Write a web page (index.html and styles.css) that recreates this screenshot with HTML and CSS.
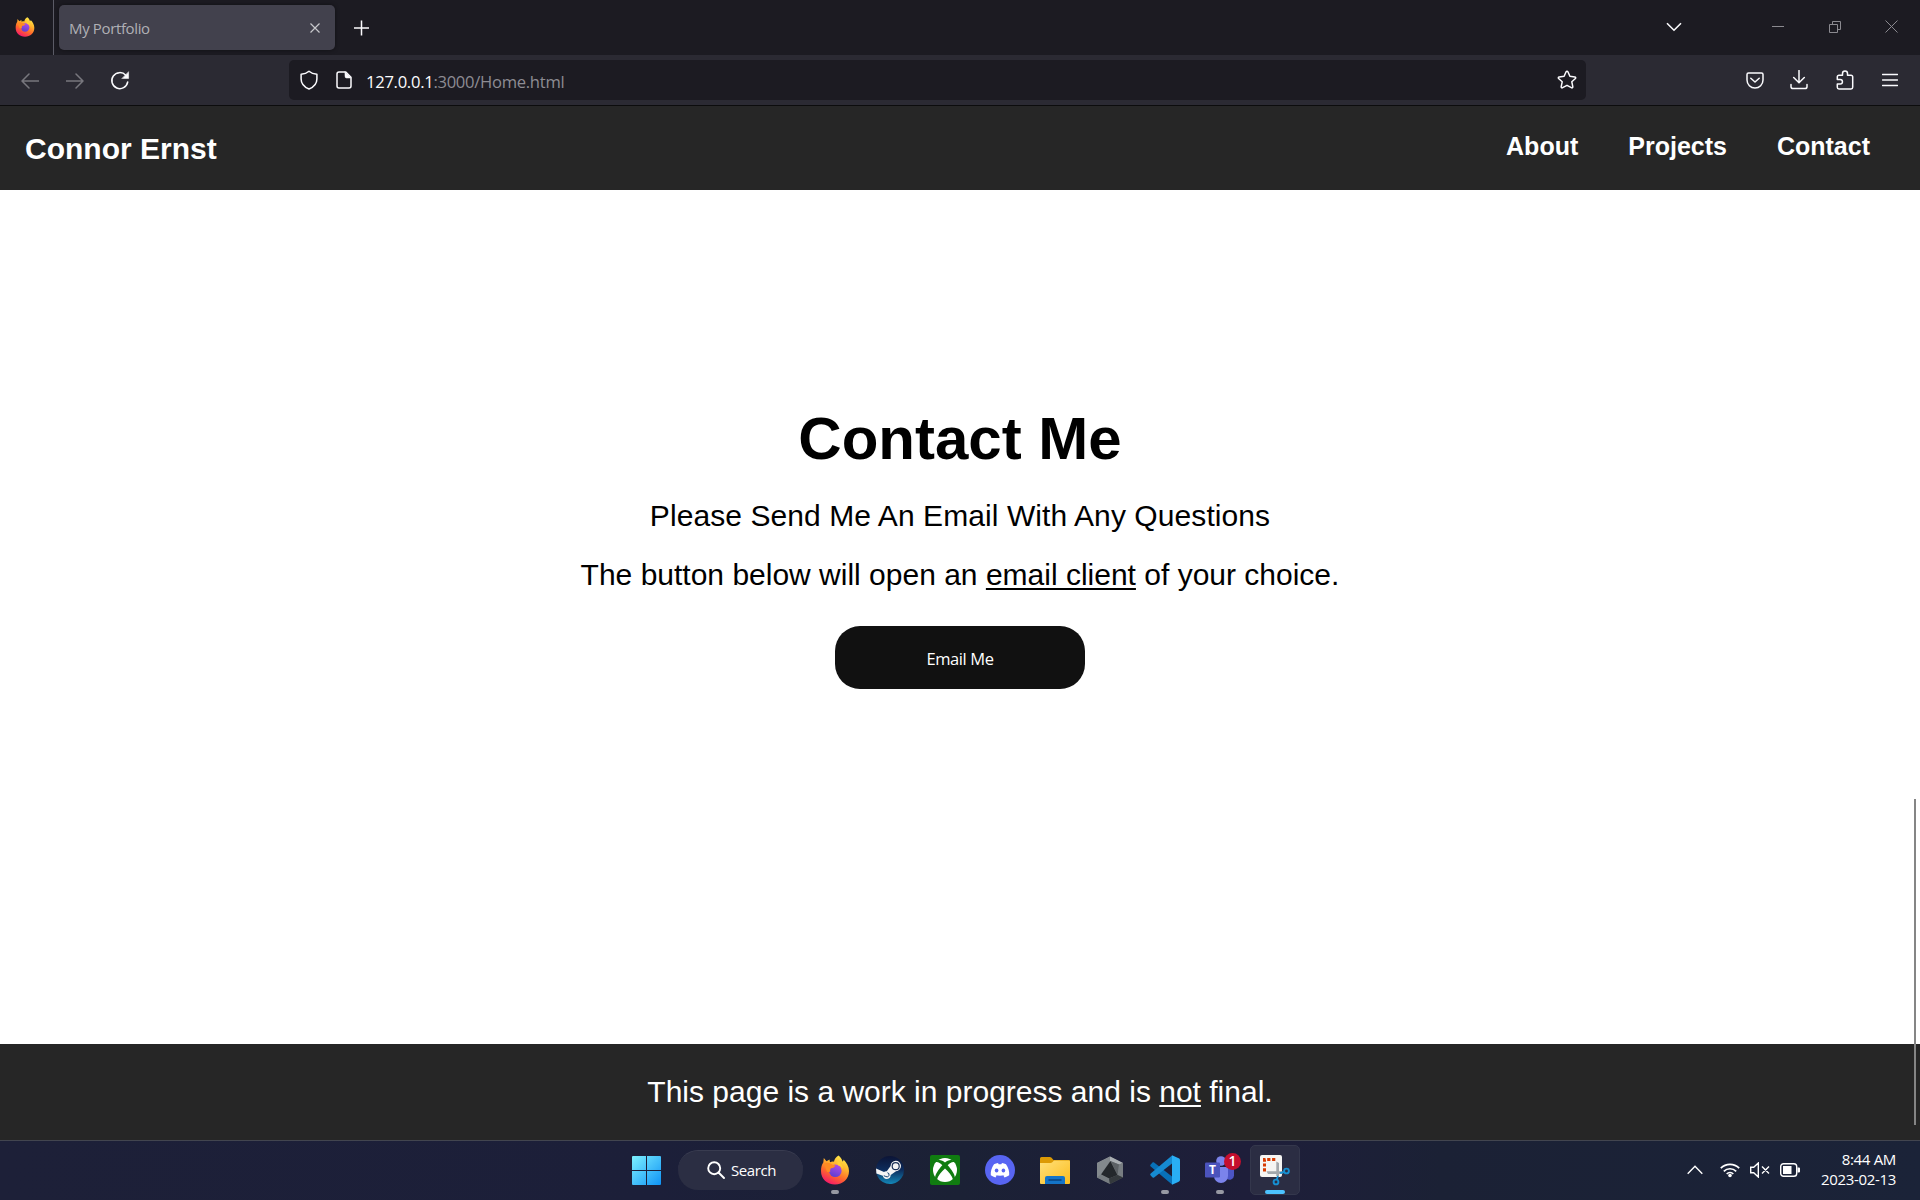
FILE: index.html
```html
<!DOCTYPE html>
<html lang="en">
<head>
<meta charset="utf-8">
<title>My Portfolio</title>
<link rel="stylesheet" href="styles.css">
</head>
<body>
<svg class="defs" width="0" height="0" aria-hidden="true">
  <defs>
    <linearGradient id="flame" x1=".8" y1="0" x2=".3" y2="1"><stop offset="0" stop-color="#fff44f"/><stop offset=".35" stop-color="#ffb52e"/><stop offset=".65" stop-color="#ff6a2a"/><stop offset="1" stop-color="#f5156c"/></linearGradient>
    <linearGradient id="globe" x1=".7" y1="0" x2=".3" y2="1"><stop offset="0" stop-color="#b04be8"/><stop offset="1" stop-color="#5b3fd0"/></linearGradient>
    <linearGradient id="win" x1="0" y1="0" x2="1" y2="1"><stop offset="0" stop-color="#7df0ff"/><stop offset="1" stop-color="#0f93f5"/></linearGradient>
    <linearGradient id="steam" x1="0" y1="0" x2="0" y2="1"><stop offset="0" stop-color="#0c1436"/><stop offset=".5" stop-color="#0d2c5c"/><stop offset="1" stop-color="#1387b8"/></linearGradient>
    <linearGradient id="folder" x1="0" y1="0" x2="1" y2="1"><stop offset="0" stop-color="#ffe07a"/><stop offset="1" stop-color="#fcbd1e"/></linearGradient>
    <linearGradient id="hex" x1="0" y1="0" x2="1" y2="1"><stop offset="0" stop-color="#9aa0a4"/><stop offset="1" stop-color="#44484c"/></linearGradient>
    <symbol id="firefox" viewBox="0 0 30 30">
      <path fill="url(#flame)" d="M18.500 .500C20.500 2 22 4 22.500 6.500c.8-.3 1-1 1-2 3 3 5.500 7 5.500 11.500C29 24 23 29.500 15 29.500S1 24 1 16C1 12.500 1.700 9.500 3.300 7.500L3.800 3 6.500 6.300 9.500 4.500 10 7.200c1.200-.6 2.700-.8 4-.5C14.200 4.200 16 2 18.500 .5z"/>
      <circle cx="15.300" cy="15.800" r="6.300" fill="url(#globe)"/>
      <path fill="#ff8b22" d="M4 8.500c2.200-1 5-1 7.200.4 1.500 1 3 1.300 4.300 1.500-.5 1.600-2.500 2.500-4.500 2.800-.9 1-1.100 2.300-.7 3.500L7 17z"/>
      <path fill="#ffcf35" d="M18 4.500c1.500 2.500 4.500 4.500 5 9.500-1.200-2-2.500-3-4.500-3.500-1.500-2-1.500-4-.5-6z"/>
    </symbol>
  </defs>
</svg>

<header class="tab-strip">
  <div class="pinned"><svg width="20" height="20"><use href="#firefox"/></svg></div>
  <div class="tab">
    <span class="tab-title">My Portfolio</span>
    <svg class="tab-close" width="10" height="10" viewBox="0 0 10 10"><path d="M.5 .5l9 9M9.500 .5l-9 9"/></svg>
  </div>
  <svg class="new-tab" width="16" height="16" viewBox="0 0 16 16"><path d="M8.500 .5v15M1 8h15"/></svg>
  <div class="window-controls">
    <svg class="list-tabs" width="16" height="10" viewBox="0 0 16 10"><path d="M1 1.200l7 7 7-7"/></svg>
    <svg width="12" height="13" viewBox="0 0 12 13"><path d="M0 6.500h12"/></svg>
    <svg width="12" height="12" viewBox="0 0 12 12"><path d="M.5 3.500h8v8h-8zM3.500 3.500v-3h8v8h-3"/></svg>
    <svg width="13" height="13" viewBox="0 0 13 13"><path d="M.5 .5l12 12M12.500 .5l-12 12"/></svg>
  </div>
</header>

<div class="toolbar">
  <div class="nav-buttons">
    <svg class="dim" width="18" height="16" viewBox="0 0 18 16"><path d="M18 8H1.200M8 1L1 8l7 7"/></svg>
    <svg class="dim" width="18" height="16" viewBox="0 0 18 16"><path d="M0 8h16.800M10 1l7 7-7 7"/></svg>
    <svg width="20" height="20" viewBox="0 0 20 20"><path d="M17.700 11A8 8 0 1 1 15.800 4.300"/><path class="solid" d="M18.600 1v6.500h-6.500z"/></svg>
  </div>
  <div class="url-bar">
    <svg width="18" height="20" viewBox="0 0 18 20"><path d="M9 1.200C7 3 4 4 1.100 4.200V9c0 4.500 3 8 7.900 10 4.900-2 7.900-5.500 7.900-10V4.200C14 4 11 3 9 1.200z"/></svg>
    <svg class="page-icon" width="16" height="18" viewBox="0 0 16 18"><path d="M3 1h6.800L15 6.200V15a2 2 0 0 1-2 2H3a2 2 0 0 1-2-2V3a2 2 0 0 1 2-2z"/><path class="solid" d="M9 1l6 6H10.500A1.500 1.500 0 0 1 9 5.500z"/></svg>
    <span class="url">127.0.0.1<span class="url-rest">:3000/Home.html</span></span>
    <svg class="star" width="20" height="20" viewBox="0 0 20 20"><path d="M10 1.200c.4 0 .7.200.9.600l2 4.500 4.900.6c.9.100 1.200 1 .6 1.600l-3.600 3.300 1 4.900c.2.900-.6 1.500-1.400 1L10 15.300l-4.400 2.400c-.8.500-1.600-.1-1.400-1l1-4.900L1.600 8.500C1 7.900 1.300 7 2.200 6.900l4.900-.6 2-4.500c.2-.4.500-.6.9-.6z"/></svg>
  </div>
  <div class="tool-buttons">
    <svg width="18" height="17" viewBox="0 0 18 17"><path d="M2.500 1h13A1.500 1.500 0 0 1 17 2.500V8A8 8 0 0 1 1 8V2.500A1.500 1.500 0 0 1 2.500 1z"/><path d="M4.800 6.200L9 10l4.200-3.800"/></svg>
    <svg width="18" height="20" viewBox="0 0 18 20"><path d="M9 .5v12M3.700 7.500L9 12.800l5.300-5.300M1 14.500v2.200C1 18 1.700 18.500 3 18.500h12c1.300 0 2-.5 2-1.800v-2.200"/></svg>
    <svg width="18" height="20" viewBox="0 0 18 20"><path d="M6.500 5.200V3.500a2.500 2.500 0 0 1 5 0v1.700H15A1.700 1.700 0 0 1 16.700 7v10.200a1.700 1.700 0 0 1-1.700 1.700H3a1.700 1.700 0 0 1-1.700-1.700V14h2.900a2 2 0 0 0 0-4.500H1.300V7A1.700 1.700 0 0 1 3 5.200z"/></svg>
    <svg width="16" height="14" viewBox="0 0 16 14"><path d="M.5 1.500h15M.5 7h15M.5 12.500h15"/></svg>
  </div>
</div>

<div class="site">
  <nav class="site-nav">
    <a class="brand">Connor Ernst</a>
    <div class="links"><a>About</a><a>Projects</a><a>Contact</a></div>
  </nav>
  <main class="contact">
    <h1>Contact Me</h1>
    <p class="lead">Please Send Me An Email With Any Questions</p>
    <p>The button below will open an <u>email client</u> of your choice.</p>
    <button class="email-button">Email Me</button>
  </main>
  <footer class="site-footer"><p>This page is a work in progress and is <u>not</u> final.</p></footer>
  <div class="scroll-thumb"></div>
</div>

<div class="taskbar">
  <div class="apps">
    <svg class="start" width="29" height="29" viewBox="0 0 29 29"><path fill="url(#win)" d="M1 0h13v14H0V1a1 1 0 0 1 1-1zM15 0h13a1 1 0 0 1 1 1v13H15zM0 15h14v14H1a1 1 0 0 1-1-1zM15 15h14v13a1 1 0 0 1-1 1H15z"/></svg>
    <div class="search"><svg width="18" height="18" viewBox="0 0 18 18"><circle cx="7.200" cy="7.200" r="6"/><path d="M11.500 11.500l5.500 5.500"/></svg><span>Search</span></div>
    <div class="slot running"><svg width="30" height="30"><use href="#firefox"/></svg></div>
    <div class="slot"><svg width="30" height="30" viewBox="0 0 30 30"><path fill="url(#steam)" d="M15 1a14 14 0 1 1-13.400 18L1 13A14 14 0 0 1 15 1z"/><path fill="#f4f4f4" d="M1 13.500l8 3.400a4 4 0 0 1 2.800-.6l3.800-5.300a5.200 5.200 0 1 1 5.400 5.200l-5.300 3.800a4 4 0 0 1-7.900.8L1.400 18.500z"/><circle cx="20.700" cy="11.200" r="3.500" fill="#f4f4f4" stroke="#1c3158" stroke-width="1.200"/><path d="M8.800 20.700l2 .8a2.100 2.100 0 1 0 1.600-3.800" fill="none" stroke="#174371" stroke-width="1"/></svg></div>
    <div class="slot"><svg width="30" height="30" viewBox="0 0 30 30"><rect width="30" height="30" rx="2" fill="#107c10"/><circle cx="15" cy="15" r="12" fill="#fff"/><path fill="#107c10" d="M7 5.500C10 4.300 13 6 15 7.500c2-1.500 5-3.200 8-2 1 .3 2 1 1.500 1.700C22 6.600 19.500 8.500 17.700 10.300c3.700 4.200 7 8.700 7.300 12.700l-1.800 2C22 20.500 18.500 16.500 15 13.400 11.500 16.500 8 20.500 6.800 25L5 23c.3-4 3.600-8.500 7.300-12.700C10.500 8.500 8 6.600 5.500 7.200 5 6.500 6 5.800 7 5.500z"/></svg></div>
    <div class="slot"><svg width="30" height="30" viewBox="0 0 30 30"><circle cx="15" cy="15" r="15" fill="#5865f2"/><path fill="#fff" d="M9 9.200a17 17 0 0 1 4-1.200l.7 1.300h2.600L17 8a17 17 0 0 1 4 1.200c2.500 3.600 3.500 7.200 3.200 11a15 15 0 0 1-4.700 2.300l-1.100-1.900 1.300-.7c-3 1-6.400 1-9.400 0l1.300.7-1.100 1.900a15 15 0 0 1-4.700-2.300c-.3-3.800.7-7.400 3.200-11z"/><ellipse cx="11.600" cy="15.600" rx="1.800" ry="2" fill="#5865f2"/><ellipse cx="18.400" cy="15.600" rx="1.800" ry="2" fill="#5865f2"/></svg></div>
    <div class="slot"><svg width="30" height="30" viewBox="0 0 30 30"><path fill="#dc9a05" d="M0 3.500A1.500 1.500 0 0 1 1.500 2h8.300c.6 0 1 .2 1.500.6L13.500 5H29a1 1 0 0 1 1 1v8H0z"/><path fill="url(#folder)" d="M0 8h10.500c.8 0 1.300-.3 1.800-.8L14 5.500h15a1 1 0 0 1 1 1V28a1 1 0 0 1-1 1H1a1 1 0 0 1-1-1z"/><path fill="#1474c8" d="M5 29v-6a2 2 0 0 1 2-2h16a2 2 0 0 1 2 2v6z"/><path stroke="#07427f" stroke-width="1.500" stroke-linecap="round" d="M9 25h12"/></svg></div>
    <div class="slot"><svg width="30" height="30" viewBox="0 0 30 30"><path fill="url(#hex)" d="M15 1.500l13 6.500v14.500L15 29 2 22.500V8z"/><path fill="#a9aeb2" d="M15 1.500L28 8l-4 1.500L15 6z"/><path fill="#83898d" d="M2 8l13-6.500V6L6 19.500 2 22.500z"/><path fill="#24282c" d="M15.500 6L22.500 20 14 23.500 6 19.500z"/><path fill="#5c6165" d="M15.500 6L24 9.500 22.500 20z"/><path fill="#777d81" d="M2 22.500L6 19.500l8 4 1 5.500z"/><path fill="#777d81" d="M28 8l-4 1.500L22.500 20l5.500 2.500z"/><path fill="#34393d" d="M14 23.500l8.500-3.500 5.500 2.500L15 29z"/></svg></div>
    <div class="slot running"><svg width="30" height="30" viewBox="0 0 30 30"><path fill="#0871b8" d="M.7 9.500l1.600-1.800c.5-.5 1.200-.5 1.800-.1L22 21.500V29.500L.7 11.500c-.7-.6-.6-1.400 0-2z"/><path fill="#168bd2" d="M.7 20.500l1.600 1.800c.5.500 1.200.5 1.800.1L22 8.500V.5L.7 18.500c-.7.600-.6 1.400 0 2z"/><path fill="#29aef4" d="M22 .3L28.700 3.300c.8.400 1.300 1 1.300 1.900v19.600c0 .9-.5 1.500-1.300 1.900L22 29.700z"/></svg></div>
    <div class="slot running"><svg class="teams" width="30" height="30" viewBox="0 0 30 30"><path fill="#4c55c5" d="M20 12h9v8.500a4.500 4.500 0 0 1-7 3.500z"/><circle cx="16" cy="6" r="4.800" fill="#7b83eb"/><path fill="#7b83eb" d="M9 12h14v9a7 7 0 0 1-14 0z"/><rect y="7.500" width="15" height="15" rx="1.300" fill="#4b53bc"/><text x="7.500" y="19" text-anchor="middle">T</text></svg><span class="badge">1</span></div>
    <div class="slot active"><svg width="30" height="30" viewBox="0 0 30 30"><rect width="22" height="22" rx="2" fill="#f5f5f3"/><path fill="none" stroke="#d83b01" stroke-width="3" stroke-dasharray="3.200 1.700" d="M4.500 16.500v-12h12"/><path fill="#a3a8ac" d="M16.300 6.500l2.700 1.500v13h-2.700zM6.500 16.300h16v2.700H8z"/><circle cx="26.500" cy="16" r="2.400"/><circle cx="16" cy="27" r="2.400"/><path d="M24 17l-4 1.200M16.800 24.500l1.200-3.500" class="blade"/></svg></div>
  </div>
  <div class="tray">
    <svg width="16" height="10" viewBox="0 0 16 10"><path d="M.7 8.700L8 1.200l7.300 7.500"/></svg>
    <svg class="wifi" width="20" height="16" viewBox="0 0 20 16"><path d="M.8 6.200a13 13 0 0 1 18.400 0M3.800 9.300a8.800 8.800 0 0 1 12.400 0M6.700 12a4.700 4.700 0 0 1 6.600 0"/><circle cx="10" cy="13.500" r="1.800"/></svg>
    <svg class="volume" width="20" height="16" viewBox="0 0 20 16"><path d="M.7 5.200h3L8.300 1v14l-4.600-4.200h-3zM12 4.500l7 7M19 4.500l-7 7"/></svg>
    <svg class="battery" width="20" height="14" viewBox="0 0 20 14"><rect x=".7" y=".7" width="16" height="12.600" rx="2.800"/><path class="fill" d="M3 3h8.500v8H3zM17.500 4.500H19a1 1 0 0 1 1 1v3a1 1 0 0 1-1 1h-1.500z"/></svg>
    <div class="clock"><span class="time">8:44 AM</span><span>2023-02-13</span></div>
  </div>
</div>
</body>
</html>
```
FILE: styles.css
```css
* { box-sizing: border-box; }
body { margin: 0; height: 1200px; overflow: hidden; display: flex; flex-direction: column; background: #fff; font-family: "Open Sans", "Noto Sans", sans-serif; }
svg { display: block; flex: none; }
h1, p { margin: 0; }
.defs { position: absolute; }

/* browser tab strip */
.tab-strip { height: 55px; background: #1c1b22; display: flex; align-items: flex-start; stroke: #fbfbfe; fill: none; }
.pinned { width: 54px; height: 55px; padding: 17px 0 0 15px; border-right: 1px solid #5b5b66; stroke: none; }
.tab { width: 276px; height: 45px; margin: 5px 0 0 5px; padding: 0 15px 0 10px; border-radius: 5px; background: #42414d; box-shadow: 0 0 4px rgba(0,0,0,.45); display: flex; align-items: center; justify-content: space-between; }
.tab-title { color: #b0b0b5; font-size: 15px; letter-spacing: -.36px; line-height: 20px; padding-top: 1px; }
.tab-close { stroke: #c8c8cc; stroke-width: 1.200; }
.new-tab { margin: 20px 0 0 18px; stroke-width: 1.500; }
.window-controls { margin-left: auto; padding: 20px 22px 0 0; display: flex; align-items: center; stroke: #8b8a90; }
.window-controls svg:nth-child(2) { margin-left: 90px; }
.window-controls svg:nth-child(3) { margin-left: 45px; }
.window-controls svg:nth-child(4) { margin-left: 44px; }
.list-tabs { stroke: #fbfbfe; stroke-width: 1.600; }

/* browser toolbar */
.toolbar { height: 51px; background: #2b2a33; border-bottom: 1px solid #0c0c0d; display: flex; align-items: center; fill: none; stroke: #fbfbfe; stroke-width: 1.500; stroke-linejoin: round; stroke-linecap: round; }
.toolbar .solid { fill: #fbfbfe; stroke-width: .5; }
.nav-buttons { width: 289px; padding: 1px 0 0 21px; display: flex; align-items: center; gap: 26px; }
.nav-buttons svg:nth-child(2) { margin-left: 1px; }
.dim { stroke: #78777e; }
.url-bar { width: 1297px; height: 40px; padding: 0 9px 0 11px; border-radius: 5px; background: #1c1b22; display: flex; align-items: center; }
.page-icon { margin-left: 18px; }
.url { margin-left: 14px; padding-top: 3px; color: #fbfbfe; font-size: 16.600px; letter-spacing: -.29px; white-space: nowrap; }
.url-rest { color: #8d8c93; }
.star { margin-left: auto; }
.tool-buttons { margin-left: auto; padding-right: 22px; display: flex; align-items: center; gap: 28px; }
.tool-buttons svg:first-child { margin-right: -2px; }

/* portfolio page */
.site { position: relative; height: 1034px; display: flex; flex-direction: column; font-family: "Liberation Sans", Arial, sans-serif; }
.site-nav { height: 84px; background: #262626; color: #fff; font-weight: 700; display: flex; justify-content: space-between; padding: 0 50px 0 25px; }
.brand { font-size: 30px; line-height: 34px; margin-top: 26px; }
.links { display: flex; gap: 50px; font-size: 25px; line-height: 29px; margin-top: 26px; }
.contact { flex: 1; display: flex; flex-direction: column; align-items: center; padding-top: 215px; color: #000; }
.contact h1 { font-size: 60px; line-height: 68px; margin-bottom: 26px; }
.contact p { font-size: 30px; line-height: 34px; margin-bottom: 25px; }
.contact .lead { letter-spacing: .08px; }
u { text-decoration-thickness: 2px; text-underline-offset: 3px; }
.email-button { width: 250px; height: 63px; margin-top: 9px; border: 0; padding: 1px 0 0; border-radius: 25px; background: #111; color: #fff; font: 16.500px "Open Sans", "Noto Sans", sans-serif; letter-spacing: -.4px; }
.site-footer { height: 96px; background: #262626; color: #fff; text-align: center; padding-top: 31px; font-size: 30px; line-height: 34px; }
.scroll-thumb { position: absolute; left: 1914px; top: 693px; width: 2px; height: 326px; background: #858585; }

/* taskbar */
.taskbar { height: 60px; border-top: 1px solid #42454f; background: linear-gradient(90deg, #1d2038, #1c1f39 34%, #1b2135 50%, #1e1e3a 65%, #1b2135 75%, #1b2338); color: #fff; display: flex; justify-content: space-between; }
.apps { padding: 4px 0 0 632px; display: flex; align-items: flex-start; gap: 5px; }
.start { margin: 11px 12px 0 0; }
.search { width: 125px; height: 40px; margin: 5px 2px 0 0; padding: 0 0 2px 29px; border-radius: 20px; background: #2b2e43; border-top: 1px solid #393c50; display: flex; align-items: center; gap: 6px; font-size: 15px; letter-spacing: -.4px; }
.search span { padding-top: 1px; }
.search svg { fill: none; stroke: #fff; stroke-width: 1.900; stroke-linecap: round; }
.slot { position: relative; width: 50px; height: 50px; padding: 10px; border-radius: 5px; }
.running::after, .active::after { content: ""; position: absolute; left: 21px; bottom: 1px; width: 8px; height: 4px; border-radius: 2px; background: #9799a3; }
.active { background: #2b2d43; border: 1px solid #34374c; padding: 9px; }
.active::after { left: 14px; bottom: 0; width: 20px; background: #4cc2ff; }
.active svg { overflow: visible; }
.active circle, .blade { stroke: #1690d3; stroke-width: 1.900; fill: none; }
.teams text { font: 700 12px "Open Sans", sans-serif; fill: #fff; }
.badge { position: absolute; left: 29px; top: 8px; width: 17px; height: 17px; border-radius: 50%; background: #c50f2e; font-size: 14px; font-weight: 600; line-height: 16px; text-align: center; }
.tray { padding: 0 24px 2px 0; display: flex; align-items: center; fill: none; stroke: #fff; stroke-width: 1.400; }
.wifi { margin-left: 17px; stroke-width: 1.700; }
.wifi circle { fill: #fff; stroke: none; }
.volume { margin-left: 10px; }
.battery { margin-left: 10px; }
.battery .fill { fill: #fff; stroke: none; }
.clock { width: 96px; padding-bottom: 2px; text-align: right; font-size: 15px; line-height: 20px; letter-spacing: -.32px; display: flex; flex-direction: column; }
```
